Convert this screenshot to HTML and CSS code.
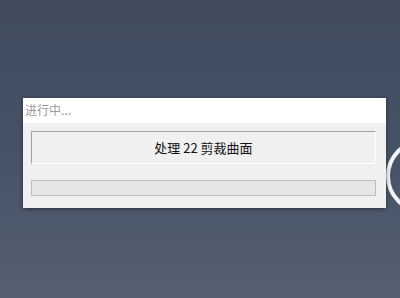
FILE: index.html
```html
<!DOCTYPE html>
<html>
<head>
<meta charset="utf-8">
<link rel="stylesheet" href="styles.css">
</head>
<body>
<div class="desk">
  <div class="dialog">
    <div class="titlebar">进行中...</div>
    <div class="content">
      <div class="label">处理 22 剪裁曲面</div>
      <div class="progress"></div>
    </div>
  </div>
  <div class="ring"></div>
</div>
</body>
</html>
```

FILE: styles.css
```css
html, body {
  margin: 0;
  padding: 0;
}
body {
  width: 400px;
  height: 298px;
  overflow: hidden;
  background: linear-gradient(to bottom, #404c5e 0%, #465266 50%, #556172 100%);
  font-family: "Noto Sans CJK SC", "Noto Sans", sans-serif;
}
.desk {
  position: relative;
  width: 400px;
  height: 298px;
  overflow: hidden;
  padding: 98px 0 0 23px;
  box-sizing: border-box;
}
.dialog {
  position: relative;
  z-index: 2;
  width: 363px;
  background: #f0f0f0;
  box-shadow: 0 1px 4px rgba(20, 25, 35, 0.6);
}
.titlebar {
  height: 25px;
  background: #ffffff;
  color: #9a9a9a;
  font-size: 12px;
  line-height: 23px;
  padding-left: 2px;
}
.content {
  padding: 8px 10px 12px 8px;
  display: flex;
  flex-direction: column;
  gap: 16px;
}
.label {
  height: 33px;
  box-sizing: border-box;
  border-top: 1px solid #a0a0a0;
  border-left: 1px solid #a0a0a0;
  border-bottom: 1px solid #ffffff;
  border-right: 1px solid #ffffff;
  display: flex;
  align-items: center;
  justify-content: center;
  font-size: 13px;
  color: #111;
}
.progress {
  height: 16px;
  box-sizing: border-box;
  border: 1px solid #bcbcbc;
  background: #e6e6e6;
}
.ring {
  position: absolute;
  z-index: 1;
  left: 386px;
  top: 139px;
  width: 74px;
  height: 74px;
  box-sizing: border-box;
  border: 4px solid #f4f4f4;
  border-radius: 50%;
}
```
